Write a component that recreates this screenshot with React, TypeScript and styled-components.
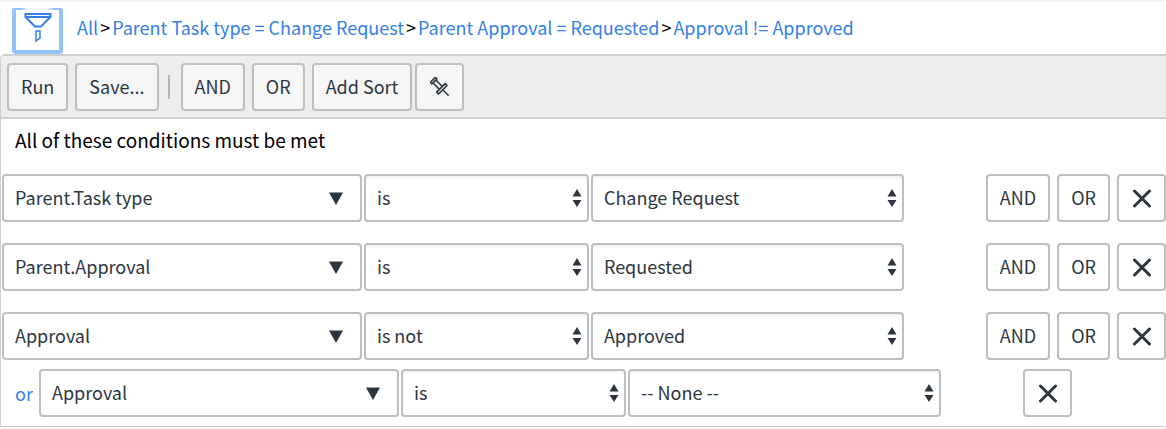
import React from 'react';
import styled, { createGlobalStyle, css } from 'styled-components';

const GlobalStyle = createGlobalStyle`
  *, *::before, *::after { box-sizing: border-box; }
  body {
    margin: 0;
    background: #fff;
    color: #000;
    font-family: "Source Sans Pro", "Noto Sans CJK SC", "Noto Sans", sans-serif;
    font-size: 18px;
    line-height: 24px;
  }
`;

const ink = '#2d363f';
const link = '#3580e8';
const glow = '#94c2fa';
const line = '#bcbfc1';

const Page = styled.main`
  border-top: 2px solid #f3f3f3;
`;

const Header = styled.header`
  display: flex;
  align-items: flex-start;
  gap: 14px;
  height: 52px;
  padding: 6px 12px 0;
`;

const FilterToggle = styled.button`
  display: flex;
  justify-content: center;
  width: 51px;
  height: 46px;
  padding: 4px 0 0;
  border: 4px solid ${glow};
  border-top: 0;
  border-radius: 2px 2px 4px 4px;
  background:
    linear-gradient(90deg, ${glow} 5px, #eef5fe 12px, #eef5fe 31px, ${glow} 38px) top / 100% 2px no-repeat,
    #fff;
  color: ${link};
`;

const Breadcrumbs = styled.nav`
  padding-top: 7px;
  white-space: nowrap;
`;

const Crumb = styled.a`
  color: ${link};
  text-decoration: none;
`;

const Separator = styled.span`
  margin: 0 2px;
`;

const Builder = styled.section`
  border: solid #cfcfcf;
  border-width: 2px 0 1px 1px;
  border-top-left-radius: 5px;
`;

const Toolbar = styled.div`
  display: flex;
  align-items: center;
  gap: 7px;
  padding: 7px 6px 6px;
  border-bottom: 2px solid #cfcfcf;
  border-top-left-radius: 4px;
  background: #ededed;
`;

const Button = styled.button<{ $filled?: boolean }>`
  flex: none;
  display: inline-flex;
  align-items: center;
  justify-content: center;
  height: 48px;
  padding: 0 12px 2px;
  border: 2px solid ${line};
  border-radius: 4px;
  background: ${p => (p.$filled ? '#f6f6f6' : '#fff')};
  color: ${ink};
  font: inherit;
`;

const IconButton = styled(Button)`
  width: 49px;
  padding: 0;
`;

const ButtonGroup = styled.div<{ $gap: number }>`
  display: flex;
  gap: ${p => p.$gap}px;
`;

const Divider = styled.span`
  width: 2px;
  height: 24px;
  margin: 0 4px 0 2px;
  background: #b4b4b4;
`;

const Title = styled.h2`
  margin: 0;
  padding: 9px 14px 0;
  font-size: 19px;
  font-weight: 400;
`;

const Conditions = styled.div`
  display: flex;
  flex-direction: column;
  gap: 21px;
  padding: 22px 0 9px 1px;
`;

const Group = styled.div`
  display: flex;
  flex-direction: column;
  gap: 9px;
`;

const Row = styled.div<{ $nested?: boolean }>`
  display: flex;
  align-items: center;
  gap: 82px;
  ${p => p.$nested && css`padding-right: 94px;`}
`;

const Fields = styled.div`
  flex: 1;
  display: flex;
  align-items: center;
  min-width: 0;
`;

const OrLabel = styled.span`
  width: 37px;
  padding-left: 13px;
  color: ${link};
`;

const FieldGrid = styled.div`
  flex: 1;
  display: grid;
  grid-template-columns: 360fr 225fr 313fr;
  gap: 2px;
`;

const Actions = styled.div`
  display: flex;
  gap: 7px;
`;

const SelectBox = styled.div<{ $wide?: boolean }>`
  display: grid;
  grid-template-columns: minmax(0, 1fr);
  align-items: center;
  color: ${ink};

  > * { grid-area: 1 / 1; }

  > svg {
    justify-self: end;
    margin-right: ${p => (p.$wide ? 18 : 7)}px;
    pointer-events: none;
  }
`;

const Select = styled.select<{ $inset?: boolean }>`
  appearance: none;
  width: 100%;
  height: 48px;
  padding: 0 30px 3px 11px;
  border: 2px solid ${line};
  border-radius: 4px;
  background: #fff;
  box-shadow: ${p => (p.$inset ? 'inset 0 2px 2px rgba(0, 0, 0, 0.05)' : 'none')};
  color: inherit;
  font: inherit;
`;

const FunnelIcon = () => (
  <svg width="30" height="32" viewBox="0 0 30 32" fill="none" stroke="currentColor" strokeWidth="2" aria-hidden="true">
    <path d="M2.500 2h25v3L18 14.500h-6L2.500 5zM2.500 5h25" />
    <path d="M13 19h4v7l-4 3z" strokeWidth="1.500" />
  </svg>
);

const PinIcon = () => (
  <svg width="20" height="20" viewBox="0 0 20 20" fill="none" stroke="currentColor" strokeWidth="1.600" strokeLinejoin="round" aria-hidden="true">
    <path
      transform="translate(9.500 9.500) rotate(-45)"
      d="M-3.500-9.500h7v2.200h-7zM-2-7.300V2M2-7.300V2M-6 2H6v2.600H-6zM0 4.600V13"
    />
  </svg>
);

const CloseIcon = () => (
  <svg width="20" height="20" viewBox="0 0 20 20" fill="none" stroke="currentColor" strokeWidth="3" strokeLinecap="round" aria-hidden="true">
    <path d="M2.500 3l15 15M17.500 3l-15 15" />
  </svg>
);

const DownIcon = () => (
  <svg width="16" height="14" viewBox="0 0 16 14" fill="currentColor" aria-hidden="true">
    <path d="M1 1.500h14L8 14z" />
  </svg>
);

const SortIcon = () => (
  <svg width="10" height="20" viewBox="0 0 10 20" fill="currentColor" aria-hidden="true">
    <path d="M5 1l4.500 7.500h-9zM.500 12h9L5 19z" />
  </svg>
);

type Condition = { field: string; operator: string; value: string };

const crumbs = ['All', 'Parent Task type = Change Request', 'Parent Approval = Requested', 'Approval != Approved'];

const conditions: Condition[] = [
  { field: 'Parent.Task type', operator: 'is', value: 'Change Request' },
  { field: 'Parent.Approval', operator: 'is', value: 'Requested' },
  { field: 'Approval', operator: 'is not', value: 'Approved' },
];

const orCondition: Condition = { field: 'Approval', operator: 'is', value: '-- None --' };

function ConditionFields({ field, operator, value }: Condition) {
  return (
    <FieldGrid>
      <SelectBox $wide>
        <Select aria-label="Field" defaultValue={field}>
          <option>{field}</option>
        </Select>
        <DownIcon />
      </SelectBox>
      <SelectBox>
        <Select $inset aria-label="Operator" defaultValue={operator}>
          <option>{operator}</option>
        </Select>
        <SortIcon />
      </SelectBox>
      <SelectBox>
        <Select $inset aria-label="Value" defaultValue={value}>
          <option>{value}</option>
        </Select>
        <SortIcon />
      </SelectBox>
    </FieldGrid>
  );
}

function ConditionRow({ condition }: { condition: Condition }) {
  return (
    <Row>
      <Fields>
        <ConditionFields {...condition} />
      </Fields>
      <Actions>
        <Button type="button">AND</Button>
        <Button type="button">OR</Button>
        <IconButton type="button" aria-label="Remove condition"><CloseIcon /></IconButton>
      </Actions>
    </Row>
  );
}

export default function App() {
  return (
    <Page>
      <GlobalStyle />
      <Header>
        <FilterToggle type="button" aria-label="Toggle filter"><FunnelIcon /></FilterToggle>
        <Breadcrumbs aria-label="Filter">
          {crumbs.map((crumb, i) => (
            <React.Fragment key={crumb}>
              {i > 0 && <Separator>&gt;</Separator>}
              <Crumb href="#">{crumb}</Crumb>
            </React.Fragment>
          ))}
        </Breadcrumbs>
      </Header>
      <Builder>
        <Toolbar>
          <Button $filled type="button">Run</Button>
          <Button $filled type="button">Save...</Button>
          <Divider />
          <Button $filled type="button">AND</Button>
          <Button $filled type="button">OR</Button>
          <ButtonGroup $gap={3}>
            <Button $filled type="button">Add Sort</Button>
            <IconButton $filled type="button" aria-label="Pin filter"><PinIcon /></IconButton>
          </ButtonGroup>
        </Toolbar>
        <Title>All of these conditions must be met</Title>
        <Conditions>
          {conditions.slice(0, -1).map(c => <ConditionRow key={c.field} condition={c} />)}
          <Group>
            <ConditionRow condition={conditions[conditions.length - 1]} />
            <Row $nested>
              <Fields>
                <OrLabel>or</OrLabel>
                <ConditionFields {...orCondition} />
              </Fields>
              <IconButton type="button" aria-label="Remove condition"><CloseIcon /></IconButton>
            </Row>
          </Group>
        </Conditions>
      </Builder>
    </Page>
  );
}
